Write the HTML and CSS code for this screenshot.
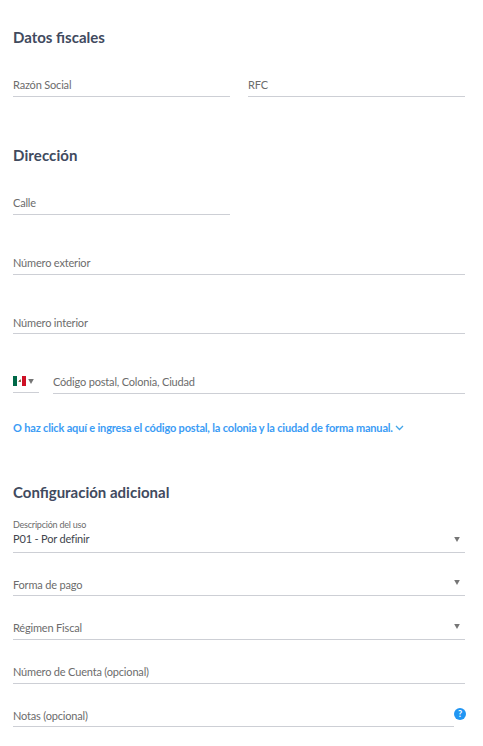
FILE: index.html
```html
<!DOCTYPE html>
<html lang="es"><head><meta charset="utf-8"><title>Datos fiscales</title><link rel="stylesheet" href="styles.css"></head>
<body>
<main class="form">
<section class="fiscal"><h2>Datos fiscales</h2>
<div class="row"><div class="field"><span>Razón Social</span></div><div class="field"><span>RFC</span></div></div></section>
<section class="address"><h2>Dirección</h2>
<div class="field half"><span>Calle</span></div>
<div class="field exterior"><span>Número exterior</span></div>
<div class="field interior"><span>Número interior</span></div>
<div class="postal"><div class="country"><svg class="flag" viewBox="0 0 13 10"><path fill="#006847" d="M0 0h4v10H0z"/><path fill="#fff" d="M4 0h5v10H4z"/><path fill="#ce1126" d="M9 0h4v10H9z"/><path fill="#8b6748" d="M6 4h1v-.5h1V6H5.5V5H6z"/></svg><svg class="arrow" viewBox="0 0 6 5"><path d="M.2 0h5.6L3 5z"/></svg></div>
<div class="field"><span>Código postal, Colonia, Ciudad</span></div></div>
<a class="manual"><span>O haz click aquí e ingresa el código postal, la colonia y la ciudad de forma manual.</span><svg class="chevron" viewBox="0 0 9 6"><path d="M1 1l3.5 3.5L8 1"/></svg></a></section>
<section class="config"><h2>Configuración adicional</h2>
<div class="field filled"><div><small>Descripción del uso</small><span class="value">P01 - Por definir</span></div><svg class="arrow" viewBox="0 0 6 5"><path d="M.2 0h5.6L3 5z"/></svg></div>
<div class="field select payment"><span>Forma de pago</span><svg class="arrow" viewBox="0 0 6 5"><path d="M.2 0h5.6L3 5z"/></svg></div>
<div class="field select regime"><span>Régimen Fiscal</span><svg class="arrow" viewBox="0 0 6 5"><path d="M.2 0h5.6L3 5z"/></svg></div>
<div class="field account"><span>Número de Cuenta (opcional)</span></div>
<div class="notes"><div class="field"><span>Notas (opcional)</span></div><b class="help">?</b></div></section>
</main></body></html>
```
FILE: styles.css
```css
* { box-sizing: border-box; }
body { margin: 0; background: #fff; color: #6c6c6c; font: 11px/16px Lato, sans-serif; letter-spacing: -0.18px; }
.form { width: 483px; height: 746px; padding: 27px 17px 0 13px; }
h2 { margin: 0; color: #414a5e; font-size: 15px; line-height: 20px; font-weight: 700; letter-spacing: 0; }
.row { display: grid; grid-template-columns: 217px 217px; gap: 18px; margin-top: 25px; }
.field { display: flex; align-items: flex-end; justify-content: space-between; width: 452px; height: 25px; padding-bottom: 3px; border-bottom: 1px solid #cdcfd5; white-space: nowrap; }
.row .field { width: auto; }
.address { margin-top: 48px; }
.address h2 { letter-spacing: 0.1px; }
.field.half { width: 217px; margin-top: 25px; }
.exterior { margin-top: 35px; }
.interior { margin-top: 34px; padding-bottom: 2px; }
.postal { display: flex; gap: 14px; margin-top: 35px; }
.postal .field { width: 412px; }
.country { display: flex; gap: 2px; width: 26px; height: 24px; padding-top: 7px; border-bottom: 1px solid #cdcfd5; }
.flag { width: 13px; height: 10px; }
.arrow { width: 6px; height: 5px; fill: #757575; }
.country .arrow { margin-top: 3px; }
.manual { display: flex; align-items: center; gap: 2px; height: 18px; margin-top: 25px; color: #3b9cf5; font-weight: 700; letter-spacing: -0.175px; white-space: nowrap; }
.chevron { width: 9px; height: 6px; fill: none; stroke: #42a5e8; stroke-width: 1.3; }
.config { margin-top: 45px; }
.filled { height: 35px; margin-top: 16px; padding-bottom: 5px; }
.filled div { display: flex; flex-direction: column; }
.filled small { font-size: 9px; line-height: 12px; letter-spacing: -0.22px; }
.filled .value { color: #41454d; }
.field .arrow { margin: 0 5px 5px 0; }
.filled .arrow { margin-bottom: 5px; }
.select { margin-top: 18px; }
.select .arrow { margin-bottom: 7px; }
.payment { padding-bottom: 2px; }
.payment .arrow { margin-bottom: 8px; }
.regime, .account { margin-top: 19px; }
.notes { display: flex; margin-top: 18px; }
.notes .field { width: 441px; padding-bottom: 2px; }
.help { display: grid; place-items: center; flex: none; width: 12px; height: 12px; margin-top: 6px; border-radius: 50%; background: #2196f3; color: #fff; font-size: 9px; line-height: 12px; letter-spacing: 0; }
```
